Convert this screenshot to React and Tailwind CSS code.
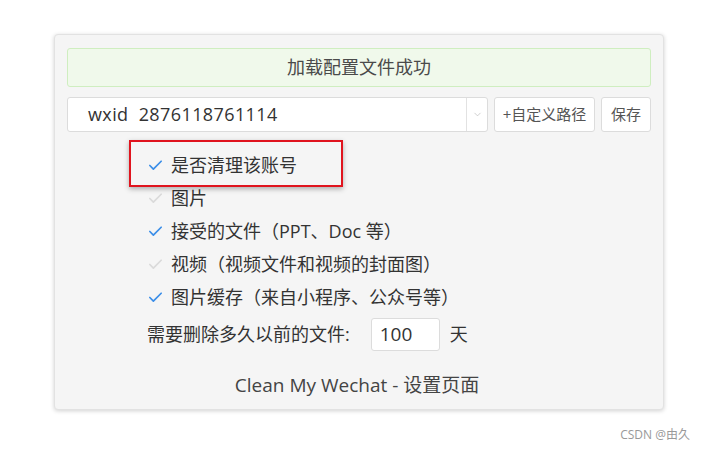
import { Check, ChevronDown } from "lucide-react";

const FONT = { fontFamily: '"Open Sans", "Noto Sans CJK SC", sans-serif' };

// ── 清理选项 ──────────────────────────────────
const OPTIONS = [
  { label: "是否清理该账号", checked: true },
  { label: "图片", checked: false },
  { label: "接受的文件（PPT、Doc 等）", checked: true },
  { label: "视频（视频文件和视频的封面图）", checked: false },
  { label: "图片缓存（来自小程序、公众号等）", checked: true },
];

function OptionRow({ opt }) {
  return (
    <div className="flex items-center h-[33px]">
      <div className="w-[24px] flex items-center -ml-[1px]">
        <Check
          size={17}
          strokeWidth={2.4}
          className={opt.checked ? "text-[#3b8ee8]" : "text-[#dadada]"}
        />
      </div>
      <span className="text-[18px] text-[#333]">{opt.label}</span>
    </div>
  );
}

export default function App() {
  return (
    <div className="w-[703px] h-[449px] bg-white relative" style={FONT}>
      <div className="pt-[34px] pl-[54px]">
        <div className="w-[610px] h-[376px] bg-[#f5f5f5] rounded-[4px] border border-[#e2e2e2] shadow-[0_1px_4px_rgba(0,0,0,0.18)] px-[12px] pt-[13px] relative">
          {/* Alert */}
          <div className="h-[39px] rounded-[3px] bg-[#f0f9eb] border border-[#cfeec0] flex items-center justify-center text-[18px] text-[#4a4a4a]">
            加载配置文件成功
          </div>

          {/* Account select + buttons */}
          <div className="flex gap-[6px] mt-[10px] h-[35px]">
            <div className="w-[421px] bg-white border border-[#dcdcdc] rounded-[3px] flex items-center">
              <span className="flex-1 pl-[20px] text-[18px] tracking-[0.4px] text-[#333]">
                wxid&nbsp;&nbsp;2876118761114
              </span>
              <div className="w-[21px] h-full border-l border-[#e2e2e2] flex items-center justify-center">
                <ChevronDown size={11} strokeWidth={1.5} className="text-[#bbb]" />
              </div>
            </div>
            <button className="w-[101px] bg-white border border-[#dcdcdc] rounded-[3px] text-[15px] text-[#555]">
              +自定义路径
            </button>
            <button className="w-[50px] bg-white border border-[#dcdcdc] rounded-[3px] text-[15px] text-[#555]">
              保存
            </button>
          </div>

          {/* Options */}
          <div className="pl-[81px] mt-[17px]">
            {OPTIONS.map((opt) => (
              <OptionRow key={opt.label} opt={opt} />
            ))}
          </div>

          {/* Days */}
          <div className="flex items-center pl-[80px] mt-[4px] h-[33px]">
            <span className="text-[18px] text-[#333]">需要删除多久以前的文件:</span>
            <div className="ml-[21px] w-[69px] h-[33px] bg-white border border-[#dcdcdc] rounded-[3px] flex items-center pl-[8px] text-[19px] text-[#333]">
              100
            </div>
            <span className="ml-[10px] text-[18px] text-[#333]">天</span>
          </div>

          {/* Footer */}
          <div className="mt-[20px] text-center text-[19px] text-[#444] pr-[4px]">
            Clean My Wechat - 设置页面
          </div>

          {/* Annotation box */}
          <div className="absolute left-[74px] top-[105px] w-[214px] h-[47px] border-2 border-[#e0141e] shadow-[0_2px_5px_rgba(0,0,0,0.3)]" />
        </div>
      </div>

      <div className="absolute right-[13px] top-[426px] text-[12px] text-[#999]">CSDN @由久</div>
    </div>
  );
}
